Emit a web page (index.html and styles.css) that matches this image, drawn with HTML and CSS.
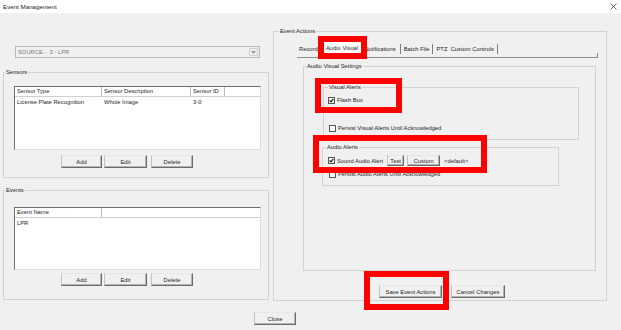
FILE: index.html
```html
<!DOCTYPE html>
<html lang="en">
<head>
    <meta charset="UTF-8">
    <meta name="viewport" content="width=device-width, initial-scale=1.0">
    <title>Event Management</title>
    <link rel="stylesheet" href="styles.css">
</head>
<body>
    <div class="titlebar">
        <span class="title">Event Management</span>
        <svg class="close-x" width="7" height="7" viewBox="0 0 7 7">
            <path d="M0.5 0.5L6.5 6.5M6.5 0.5L0.5 6.5" stroke="#444" stroke-width="0.8" fill="none"/>
        </svg>
    </div>

    <div class="dialog">
        <!-- Left column: source, sensors, events -->
        <div class="left-col">
            <div class="combo">
                <span>SOURCE -&nbsp; 3 - LPR</span>
                <span class="combo-arrow">
                    <svg width="5" height="3" viewBox="0 0 5 3"><path d="M0 0H5L2.5 3Z" fill="#9a9a9a"/></svg>
                </span>
            </div>

            <fieldset class="group sensors">
                <legend>Sensors</legend>
                <div class="listview sensors-list">
                    <div class="lv-header">
                        <span class="col-type">Sensor Type</span>
                        <span class="col-desc">Sensor Description</span>
                        <span class="col-id">Sensor ID</span>
                    </div>
                    <div class="lv-row">
                        <span class="col-type">License Plate Recognition</span>
                        <span class="col-desc">Whole Image</span>
                        <span class="col-id">3-0</span>
                    </div>
                </div>
                <div class="btn-row">
                    <button class="btn btn-add">Add</button>
                    <button class="btn btn-edit">Edit</button>
                    <button class="btn btn-delete">Delete</button>
                </div>
            </fieldset>

            <fieldset class="group events">
                <legend>Events</legend>
                <div class="listview events-list">
                    <div class="lv-header">
                        <span class="col-type">Event Name</span>
                    </div>
                    <div class="lv-row">
                        <span class="col-type">LPR</span>
                    </div>
                </div>
                <div class="btn-row events-btns">
                    <button class="btn btn-add">Add</button>
                    <button class="btn btn-edit">Edit</button>
                    <button class="btn btn-delete">Delete</button>
                </div>
            </fieldset>
        </div>

        <!-- Right column: event actions -->
        <fieldset class="group actions">
            <legend class="actions-legend">Event Actions</legend>
            <div class="tabs">
                <span class="tab tab-first">Recording</span>
                <span class="tab tab-active">Audio Visual</span>
                <span class="tab tab-notify">Notifications</span>
                <span class="tab">Batch File</span>
                <span class="tab">PTZ&nbsp; Custom Controls</span>
                <span class="tab-fill"></span>
            </div>
            <div class="tab-panel"></div>

            <fieldset class="group avs">
                <legend class="avs-legend">Audio Visual Settings</legend>

                <fieldset class="group visual">
                    <legend class="inner-legend">Visual Alerts</legend>
                    <div class="check-row">
                        <svg class="cb" width="7" height="7" viewBox="0 0 7 7">
                            <rect x="0.5" y="0.5" width="6" height="6" fill="#fff" stroke="#555"/>
                            <path d="M1.6 3.3L2.9 4.8L5.4 1.8" stroke="#111" stroke-width="1.1" fill="none"/>
                        </svg>
                        <span>Flash Box</span>
                    </div>
                    <div class="check-row persist-visual">
                        <svg class="cb" width="7" height="7" viewBox="0 0 7 7">
                            <rect x="0.5" y="0.5" width="6" height="6" fill="#fff" stroke="#555"/>
                        </svg>
                        <span>Persist Visual Alerts Until Acknowledged</span>
                    </div>
                </fieldset>

                <fieldset class="group audio">
                    <legend class="inner-legend audio-legend">Audio Alerts</legend>
                    <div class="check-row sound-row">
                        <svg class="cb" width="7" height="7" viewBox="0 0 7 7">
                            <rect x="0.5" y="0.5" width="6" height="6" fill="#fff" stroke="#555"/>
                            <path d="M1.6 3.3L2.9 4.8L5.4 1.8" stroke="#111" stroke-width="1.1" fill="none"/>
                        </svg>
                        <span>Sound Audio Alert</span>
                        <button class="btn btn-test">Test</button>
                        <button class="btn btn-custom">Custom</button>
                        <span class="default-sound">&lt;default&gt;</span>
                    </div>
                    <div class="check-row persist-audio">
                        <svg class="cb" width="7" height="7" viewBox="0 0 7 7">
                            <rect x="0.5" y="0.5" width="6" height="6" fill="#fff" stroke="#555"/>
                        </svg>
                        <span>Persist Audio Alerts Until Acknowledged</span>
                    </div>
                </fieldset>
            </fieldset>

            <div class="action-buttons">
                <button class="btn btn-save">Save Event Actions</button>
                <button class="btn btn-cancel">Cancel Changes</button>
            </div>
        </fieldset>
    </div>

    <div class="footer">
        <button class="btn btn-close">Close</button>
    </div>

    <!-- red highlight annotations -->
    <div class="mark mark-tab"></div>
    <div class="mark mark-visual"></div>
    <div class="mark mark-audio"></div>
    <div class="mark mark-save"></div>
</body>
</html>
```

FILE: styles.css
```css
body {
    margin: 0;
    width: 621px;
    height: 330px;
    overflow: hidden;
    position: relative;
    background: #f0f0f0;
    font-family: "Liberation Sans", Arial, sans-serif;
    font-size: 5.8px;
    color: #1e1e1e;
}

.titlebar {
    height: 13px;
    background: #fff;
    display: flex;
    align-items: center;
    justify-content: space-between;
    padding: 0 4px 0 3px;
}

.title {
    font-size: 6.2px;
}

.dialog {
    display: flex;
    gap: 4px;
    padding: 14px 0 0 3px;
}

.left-col {
    width: 266px;
}

/* disabled source combo */
.combo {
    margin: 19px 0 0 12px;
    width: 245px;
    height: 12px;
    box-sizing: border-box;
    border: 1px solid #b9b9b9;
    background: #f0f0f0;
    display: flex;
    align-items: center;
    justify-content: space-between;
    padding-left: 2px;
    color: #7a7a7a;
}

.combo-arrow {
    width: 9px;
    height: 8px;
    margin-right: 1px;
    box-sizing: border-box;
    border: 1px solid #d2d2d2;
    display: flex;
    align-items: center;
    justify-content: center;
}

/* group boxes */
.group {
    margin: 0;
    padding: 0;
    min-width: 0;
    box-sizing: border-box;
    border: 1px solid #d3d3d3;
}

.group legend {
    margin-left: 1px;
    padding: 0 1px;
    line-height: 8px;
    height: 8px;
}

.sensors {
    margin-top: 10px;
    height: 110px;
}

.events {
    margin-top: 8px;
    height: 114px;
}

.listview {
    margin-left: 10px;
    width: 247px;
    box-sizing: border-box;
    background: #fff;
    border: 1px solid #6f6f6f;
    border-right-color: #dedede;
    border-bottom-color: #dedede;
}

.sensors-list {
    margin-top: 10px;
    height: 64px;
}

.events-list {
    margin-top: 13px;
    height: 63px;
}

.lv-header {
    display: flex;
    height: 10px;
    border-bottom: 1px solid #d0d0d0;
    box-sizing: border-box;
}

.lv-header span {
    height: 9px;
    line-height: 9px;
    border-right: 1px solid #bdbdbd;
    box-sizing: border-box;
    padding-left: 2px;
    white-space: nowrap;
}

.lv-row {
    display: flex;
    height: 10px;
    line-height: 10px;
}

.lv-row span {
    padding-left: 2px;
    box-sizing: border-box;
    white-space: nowrap;
}

.col-type {
    width: 87px;
}

.col-desc {
    width: 89px;
}

.col-id {
    width: 34px;
}

.btn-row {
    display: flex;
    margin: 5px 0 0 57px;
}

.btn-row.events-btns {
    margin-top: 3px;
}

.btn {
    font: inherit;
    color: inherit;
    height: 13px;
    padding: 0;
    box-sizing: border-box;
    background: #f0f0f0;
    border: 1px solid;
    border-color: #e6e6e6 #6b6b6b #6b6b6b #c3c3c3;
    box-shadow: inset -1px -1px #b4b4b4;
    white-space: nowrap;
}

.btn-add {
    width: 41px;
}

.btn-edit {
    width: 43px;
    margin-left: 2px;
}

.btn-delete {
    width: 42px;
    margin-left: 4px;
}

/* event actions */
.actions {
    width: 334px;
    height: 274px;
}

.group .actions-legend {
    margin-left: 5px;
}

.tabs {
    display: flex;
    align-items: flex-end;
    margin: 5px 0 0 23px;
    width: 301px;
    height: 17px;
}

.tab {
    height: 10px;
    line-height: 10px;
    margin-bottom: 3px;
    padding: 0 3px;
    border-right: 1px solid #7c7c7c;
    white-space: nowrap;
}

.tab-first {
    width: 23px;
    overflow: hidden;
    padding-left: 2px;
    border-right: none;
    box-sizing: border-box;
}

.tab-active {
    height: 17px;
    line-height: 17px;
    margin-bottom: 0;
    padding: 0 3px 0 5px;
    background: #fff;
    border: 1px solid #d6d6d6;
    border-bottom: none;
}

.tab-notify {
    padding-left: 2px;
    padding-right: 4px;
}

.tab-fill {
    flex: 1;
    height: 4px;
    border-right: 1px solid #8a8a8a;
}

.tab-panel {
    margin-left: 23px;
    width: 301px;
    height: 1px;
    background: #8f8f8f;
}

.group.avs {
    margin: 4px 0 0 29px;
    width: 293px;
    height: 209px;
}

.group .avs-legend {
    margin-left: 2px;
}

.group.visual {
    margin: 13px 0 0 19px;
    width: 256px;
    height: 57px;
    padding: 5px 0 0 4px;
}

.group .inner-legend {
    margin-left: 0;
}

.group.audio {
    margin: 3px 0 0 18px;
    width: 237px;
    height: 43px;
    padding: 4px 0 0 5px;
}

.group .audio-legend {
    margin-left: -2px;
}

.check-row {
    display: flex;
    align-items: center;
    height: 8px;
    gap: 2px;
    white-space: nowrap;
}

.persist-visual {
    margin-top: 20px;
    padding-left: 1px;
}

.sound-row {
    height: 11px;
}

.btn-test {
    height: 11px;
    width: 17px;
    margin-left: 2px;
}

.btn-custom {
    height: 11px;
    width: 33px;
    margin-left: 1px;
}

.default-sound {
    margin-left: 2px;
}

.persist-audio {
    margin-top: 4px;
    padding-left: 1px;
}

.action-buttons {
    display: flex;
    gap: 9px;
    margin: 14px 0 0 105px;
}

.btn-save {
    width: 63px;
}

.btn-cancel {
    width: 54px;
}

.footer {
    padding: 11px 0 0 254px;
}

.btn-close {
    width: 42px;
}

/* annotation boxes drawn over the dialog */
.mark {
    position: absolute;
    box-sizing: border-box;
    border: 6px solid #ff0000;
}

.mark-tab {
    left: 318px;
    top: 36px;
    width: 49px;
    height: 23px;
}

.mark-visual {
    left: 315px;
    top: 78px;
    width: 87px;
    height: 35px;
}

.mark-audio {
    left: 313px;
    top: 135px;
    width: 174px;
    height: 38px;
}

.mark-save {
    left: 364px;
    top: 271px;
    width: 85px;
    height: 39px;
}
```
